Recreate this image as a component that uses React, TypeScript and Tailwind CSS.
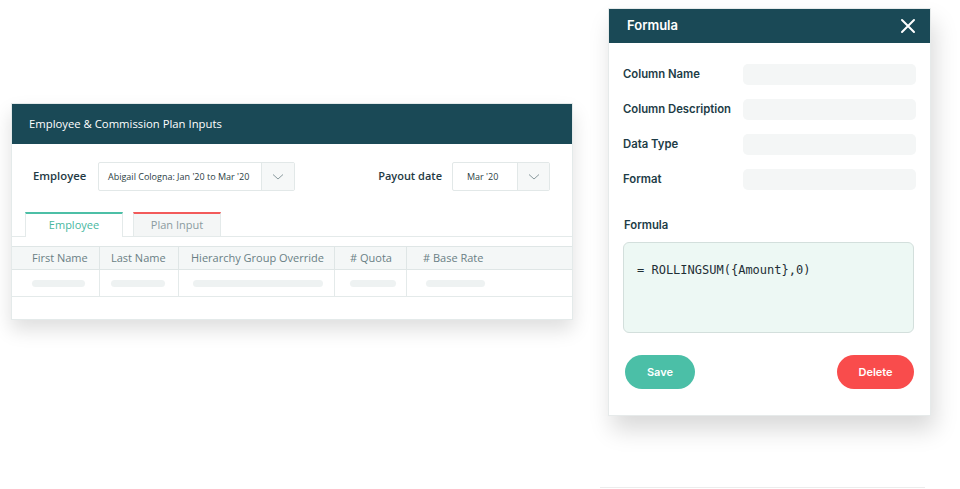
import React from "react";

const leftFont = { fontFamily: '"Open Sans", "Noto Sans", sans-serif' };
const rightFont = { fontFamily: 'Inter, "Noto Sans", sans-serif' };

function Chevron() {
  return (
    <svg width="12" height="8" viewBox="0 0 12 8" fill="none">
      <path d="M1 1.5 L6 6 L11 1.5" stroke="#8a9a9e" strokeWidth="1" />
    </svg>
  );
}

function Select({ text, w, textW }: { text: string; w: string; textW: string }) {
  return (
    <div className={`flex h-[29px] ${w} rounded-[2px] border border-[#e2e8e8] bg-white`}>
      <div className={`flex items-center ${textW} pl-[9px] text-[9px] text-[#2c3e44]`}>{text}</div>
      <div className="flex flex-1 items-center justify-center border-l border-[#e2e8e8] bg-[#f6f8f8]">
        <Chevron />
      </div>
    </div>
  );
}

function LeftCard() {
  const cols = [
    { w: "w-[88px]", pl: "pl-[20px]", label: "First Name", bar: "ml-[20px] w-[53px]" },
    { w: "w-[79px]", pl: "pl-[11px]", label: "Last Name", bar: "ml-[11px] w-[54px]" },
    { w: "w-[156px]", pl: "pl-[12px]", label: "Hierarchy Group Override", bar: "ml-[14px] w-[130px]" },
    { w: "w-[72px]", pl: "pl-[15px]", label: "# Quota", bar: "ml-[15px] w-[46px]" },
    { w: "flex-1", pl: "pl-[16px]", label: "# Base Rate", bar: "ml-[19px] w-[59px]" },
  ];
  return (
    <div
      className="mt-[103px] w-[562px] h-[217px] flex flex-col bg-white border border-[#e4eaea] shadow-[0_10px_18px_rgba(0,0,0,0.13)]"
      style={leftFont}
    >
      <div className="flex h-[40px] items-center bg-[#1a4956] pl-[17px] text-[11.3px] text-white">
        Employee &amp; Commission Plan Inputs
      </div>
      <div className="flex items-center pt-[18px] pl-[21px] pr-[22px]">
        <div className="w-[65px] text-[11.3px] font-semibold text-[#1f3a44]">Employee</div>
        <Select text="Abigail Cologna: Jan '20 to Mar '20" w="w-[197px]" textW="w-[162px]" />
        <div className="flex-1" />
        <div className="mr-[10px] text-[11px] font-semibold text-[#1f3a44]">Payout date</div>
        <Select text="Mar '20" w="w-[98px]" textW="w-[64px] !pl-[14px]" />
      </div>
      <div className="mt-[21px] flex items-end gap-[10px] pl-[13px] border-b border-[#e4eaea]">
        <div className="flex h-[25px] w-[98px] items-center justify-center border-x border-t-2 border-x-[#e4eaea] border-t-[#4cbfa6] bg-white -mb-px text-[11px] font-medium text-[#47b89f]">
          Employee
        </div>
        <div className="flex h-[24px] w-[88px] items-center justify-center border-x border-t-2 border-x-[#e4eaea] border-t-[#f25a5a] bg-[#f4f6f6] text-[11px] font-medium text-[#8b9b9f]">
          Plan Input
        </div>
      </div>
      <div className="mt-[9px] flex h-[24px] border-y border-[#dfe6e6] bg-[#f4f7f7]">
        {cols.map((c, i) => (
          <div
            key={i}
            className={`flex items-center ${c.w} ${c.pl} ${i < cols.length - 1 ? "border-r border-[#dfe6e6]" : ""} text-[11px] text-[#6a7f85]`}
          >
            {c.label}
          </div>
        ))}
      </div>
      <div className="flex h-[27px] border-b border-[#e4eaea]">
        {cols.map((c, i) => (
          <div
            key={i}
            className={`flex items-center ${c.w} ${i < cols.length - 1 ? "border-r border-[#e4eaea]" : ""}`}
          >
            <div className={`h-[7px] rounded-full bg-[#eef2f2] ${c.bar}`} />
          </div>
        ))}
      </div>
    </div>
  );
}

function Field({ label }: { label: string }) {
  return (
    <div className="flex h-[21px] items-center">
      <div className="w-[120px] text-[11.3px] font-semibold text-[#1d3c46]">{label}</div>
      <div className="h-[21px] w-[173px] rounded-[5px] bg-[#f4f6f6]" />
    </div>
  );
}

function FormulaModal() {
  return (
    <div className="flex flex-col">
      <div
        className="mt-[8px] flex h-[408px] w-[323px] flex-col bg-white border border-[#e6eaea] shadow-[4px_14px_22px_rgba(0,0,0,0.15)]"
        style={rightFont}
      >
        <div className="flex h-[34px] items-center justify-between bg-[#1a4956] pl-[18px] pr-[14px]">
          <div className="text-[13px] font-semibold text-white">Formula</div>
          <svg width="16" height="16" viewBox="0 0 16 16" fill="none">
            <path d="M2 2 L14 14 M14 2 L2 14" stroke="white" strokeWidth="2" strokeLinecap="round" />
          </svg>
        </div>
        <div className="flex flex-col gap-[14px] pl-[14px] pt-[21px]">
          <Field label="Column Name" />
          <Field label="Column Description" />
          <Field label="Data Type" />
          <Field label="Format" />
        </div>
        <div className="mt-[27px] pl-[15px] text-[11.3px] font-semibold text-[#1d3c46]">Formula</div>
        <div className="ml-[14px] mt-[8px] h-[91px] w-[291px] rounded-[6px] border border-[#d3dfdc] bg-[#edf8f4] pl-[13px] pt-[18px]">
          <div className="text-[12px] text-[#1f2f36]" style={{ fontFamily: '"DejaVu Sans Mono", monospace' }}>
            = ROLLINGSUM({"{"}Amount{"}"},0)
          </div>
        </div>
        <div className="mt-[22px] flex items-center justify-between pl-[16px] pr-[16px]">
          <div className="flex h-[34px] w-[70px] items-center justify-center rounded-full bg-[#4bbfa7] text-[11px] font-semibold text-white">
            Save
          </div>
          <div className="flex h-[34px] w-[77px] items-center justify-center rounded-full bg-[#f94c4c] text-[11px] font-semibold text-white">
            Delete
          </div>
        </div>
      </div>
      <div className="mt-[71px] -ml-[8px] h-px w-[325px] bg-[#ececec]" />
    </div>
  );
}

export default function App() {
  return (
    <div className="h-[489px] w-[960px] overflow-hidden bg-white">
      <div className="flex items-start gap-[35px] pl-[11px]">
        <LeftCard />
        <FormulaModal />
      </div>
    </div>
  );
}
